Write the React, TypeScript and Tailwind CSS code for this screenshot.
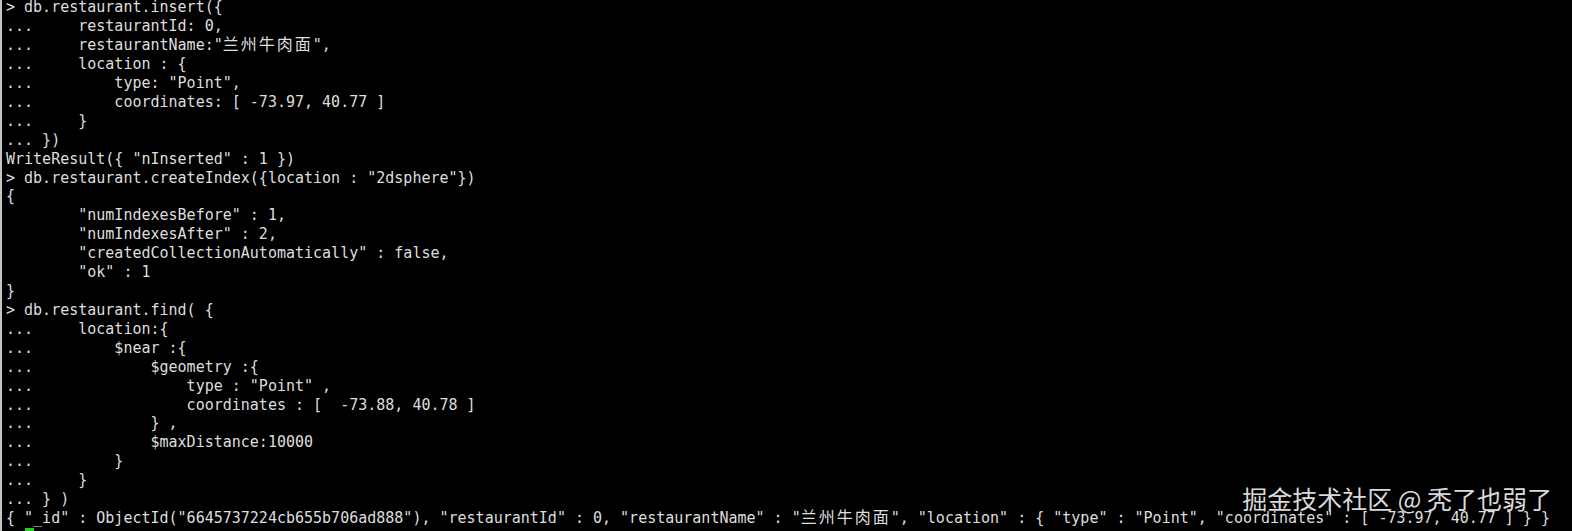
import React from "react";

const lines: string[] = [
  `> db.restaurant.insert({`,
  `...     restaurantId: 0,`,
  `...     restaurantName:"兰州牛肉面",`,
  `...     location : {`,
  `...         type: "Point",`,
  `...         coordinates: [ -73.97, 40.77 ]`,
  `...     }`,
  `... })`,
  `WriteResult({ "nInserted" : 1 })`,
  `> db.restaurant.createIndex({location : "2dsphere"})`,
  `{`,
  `        "numIndexesBefore" : 1,`,
  `        "numIndexesAfter" : 2,`,
  `        "createdCollectionAutomatically" : false,`,
  `        "ok" : 1`,
  `}`,
  `> db.restaurant.find( {`,
  `...     location:{`,
  `...         $near :{`,
  `...             $geometry :{`,
  `...                 type : "Point" ,`,
  `...                 coordinates : [  -73.88, 40.78 ]`,
  `...             } ,`,
  `...             $maxDistance:10000`,
  `...         }`,
  `...     }`,
  `... } )`,
  `{ "_id" : ObjectId("6645737224cb655b706ad888"), "restaurantId" : 0, "restaurantName" : "兰州牛肉面", "location" : { "type" : "Point", "coordinates" : [ -73.97, 40.77 ] } }`,
];

function Line({ text }: { text: string }) {
  const chars = Array.from(text);
  const out: React.ReactNode[] = [];
  let buf = "";
  chars.forEach((c, i) => {
    if (/[\u4e00-\u9fff]/.test(c)) {
      if (buf) {
        out.push(<span key={`t${i}`}>{buf}</span>);
        buf = "";
      }
      out.push(
        <span
          key={`c${i}`}
          className="inline-block w-[18px] font-['Noto_Sans_CJK_SC',sans-serif] text-[16px] leading-[15px]"
        >
          {c}
        </span>
      );
    } else {
      buf += c;
    }
  });
  if (buf) out.push(<span key="end">{buf}</span>);
  return <div className="h-[18.93px] whitespace-pre">{out}</div>;
}

export default function App() {
  return (
    <div className="relative flex h-[531px] w-[1572px] overflow-hidden border-l-2 border-[#c4c4c4] bg-black">
      <div className="mt-[-1.8px] pl-[4px] font-['DejaVu_Sans_Mono',monospace] text-[15px] leading-[18.93px] text-[#dedede]">
        {lines.map((l, i) => (
          <Line key={i} text={l} />
        ))}
        <div className="ml-[19px] mt-[-0.5px] h-[3px] w-[9px] bg-[#22d022]" />
      </div>
      <div className="absolute right-[20px] top-[486.5px] font-['Noto_Sans_CJK_SC',sans-serif] text-[25px] leading-[22px] text-[#d9d9d9] whitespace-pre">
        掘金技术社区 @ 秃了也弱了
      </div>
    </div>
  );
}
